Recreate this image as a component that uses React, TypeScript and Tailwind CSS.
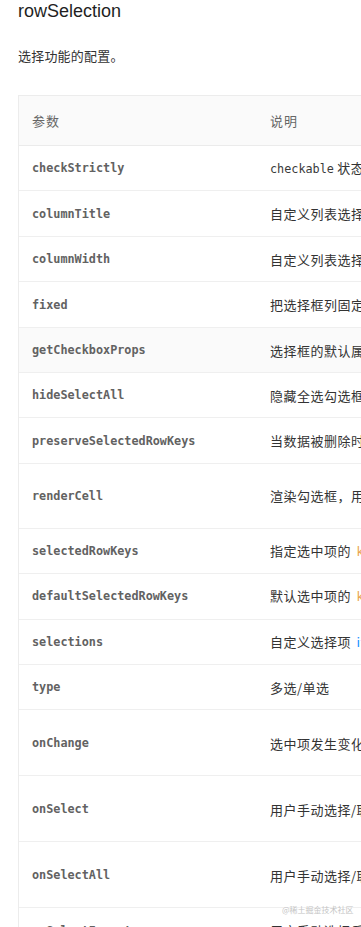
import React from 'react';

type Row = {
  name: string;
  desc: React.ReactNode;
  h: string;
  active?: boolean;
};

const mono = "font-['DejaVu_Sans_Mono','Liberation_Mono',monospace]";

const rows: Row[] = [
  {
    name: 'checkStrictly',
    h: 'h-[45.4px]',
    desc: (
      <>
        <span className={`${mono} text-[11.8px] tracking-normal text-[#3a3a3a]`}>checkable</span> 状态下节点选择完全受控（父子数据选中状态不再关联）
      </>
    ),
  },
  { name: 'columnTitle', h: 'h-[45.4px]', desc: '自定义列表选择框标题' },
  { name: 'columnWidth', h: 'h-[45.4px]', desc: '自定义列表选择框宽度' },
  { name: 'fixed', h: 'h-[45.4px]', desc: '把选择框列固定在左边' },
  { name: 'getCheckboxProps', h: 'h-[45.4px]', desc: '选择框的默认属性配置', active: true },
  { name: 'hideSelectAll', h: 'h-[45.4px]', desc: '隐藏全选勾选框与自定义选择项' },
  { name: 'preserveSelectedRowKeys', h: 'h-[45.4px]', desc: '当数据被删除时仍然保留选项的 key' },
  { name: 'renderCell', h: 'h-[65px]', desc: '渲染勾选框，用法与 Column 的 render 相同' },
  {
    name: 'selectedRowKeys',
    h: 'h-[45.4px]',
    desc: (
      <>
        指定选中项的 <span className={`${mono} ml-[2px] text-[11.8px] tracking-normal text-[#e8a24a]`}>key</span> 数组，需要和 onChange 进行配合
      </>
    ),
  },
  {
    name: 'defaultSelectedRowKeys',
    h: 'h-[45.4px]',
    desc: (
      <>
        默认选中项的 <span className={`${mono} ml-[2px] text-[11.8px] tracking-normal text-[#e8a24a]`}>key</span> 数组
      </>
    ),
  },
  {
    name: 'selections',
    h: 'h-[45.4px]',
    desc: (
      <>
        自定义选择项 <span className="ml-[2px] text-[#1890ff]">item 配置项</span>，设为 true 时使用默认选择项
      </>
    ),
  },
  { name: 'type', h: 'h-[45.4px]', desc: '多选/单选' },
  { name: 'onChange', h: 'h-[66px]', desc: '选中项发生变化时的回调' },
  { name: 'onSelect', h: 'h-[66px]', desc: '用户手动选择/取消选择某行的回调' },
  { name: 'onSelectAll', h: 'h-[66px]', desc: '用户手动选择/取消选择所有行的回调' },
  { name: 'onSelectInvert', h: 'h-[45.4px]', desc: '用户手动选择反选的回调' },
];

export default function App() {
  return (
    <div className="relative w-full h-[927px] overflow-hidden bg-white font-['Liberation_Sans','Noto_Sans_CJK_SC',sans-serif]">
      <div className="pl-[18px]">
        {/* Heading */}
        <h3 className="pt-[1px] h-[22px] text-[18px] leading-[21px] font-medium text-[#1f1f1f]">
          rowSelection
        </h3>
        <p className="mt-[23px] h-[22px] text-[13px] leading-[22px] tracking-[0.2px] text-[#333] font-['Noto_Sans_CJK_SC',sans-serif]">
          选择功能的配置。
        </p>

        {/* API table */}
        <div className="mt-[28px] w-[760px] border-t border-l border-[#ececec]">
          <div className="flex h-[50px] items-center bg-[#fafafa] border-b border-[#ebebeb] text-[13px] text-[#666] font-['Noto_Sans_CJK_SC',sans-serif]">
            <div className="w-[238px] pl-[13px] tracking-[1px]">参数</div>
            <div className="flex-1 pl-[13px] tracking-[1px]">说明</div>
          </div>

          {rows.map((row) => (
            <div
              key={row.name}
              className={`flex items-center border-b border-[#efefef] ${row.h} ${row.active ? 'bg-[#fafafa]' : ''}`}
            >
              <div className={`w-[238px] pl-[13px] pt-[2px] ${mono} text-[11.8px] font-bold text-[#626262]`}>
                {row.name}
              </div>
              <div className="flex-1 pl-[13px] pt-[1px] whitespace-nowrap text-[13px] tracking-[0.5px] text-[#333] font-['Noto_Sans_CJK_SC',sans-serif]">
                {row.desc}
              </div>
            </div>
          ))}
        </div>
      </div>

      {/* Site watermark */}
      <div className="absolute left-[282px] top-[905px] text-[8px] leading-[10px] text-[#c4c4c4] font-['Noto_Sans_CJK_SC',sans-serif] [text-shadow:0_0_2px_#fff]">
        @稀土掘金技术社区
      </div>
    </div>
  );
}
